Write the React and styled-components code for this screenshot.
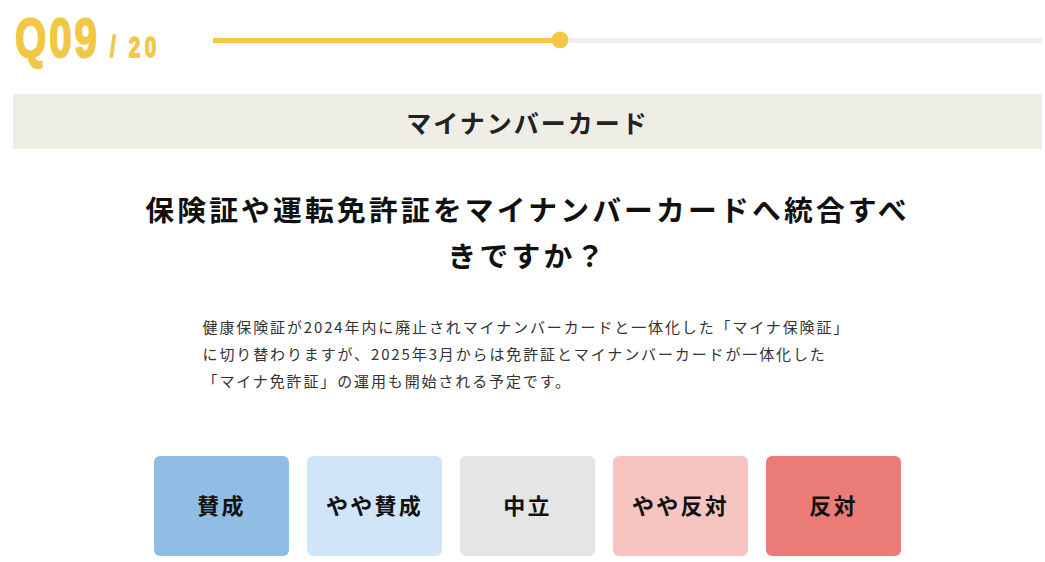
import React from "react";
import styled, { createGlobalStyle } from "styled-components";

const Global = createGlobalStyle`
  html, body { margin: 0; padding: 0; background: #fff; }
  body { font-family: "Noto Sans CJK JP", "Noto Sans", sans-serif; color: #222; }
`;

const Page = styled.div`
  padding: 0 3px 0 13px;
  box-sizing: border-box;
  width: 1045px;
`;

const Header = styled.header`
  display: flex;
  align-items: center;
  height: 80px;
`;

const Counter = styled.div`
  width: 200px;
  flex: none;
  box-sizing: border-box;
  padding-left: 2px;
  height: 58px;
  margin-bottom: 3px;
  color: #f2c744;
  font-family: "Liberation Sans", Arial, sans-serif;
  font-weight: 700;
  line-height: 1;
`;

const Condensed = styled.div`
  display: inline-block;
  white-space: nowrap;
  transform: scaleX(0.72);
  transform-origin: left center;
  -webkit-text-stroke: 2px #f2c744;
`;

const Current = styled.span`
  font-size: 56px;
  letter-spacing: 4px;
`;

const Total = styled.span`
  margin-left: 14px;
  font-size: 29px;
  letter-spacing: 6px;
  word-spacing: -2px;
  -webkit-text-stroke: 1.4px #f2c744;
`;

const Track = styled.div`
  position: relative;
  flex: 1;
  height: 5px;
  background: #efefef;
`;

const Fill = styled.div`
  position: absolute;
  left: 0;
  top: 0;
  bottom: 0;
  background: #f2c744;
`;

const Knob = styled.div`
  position: absolute;
  top: 50%;
  width: 17px;
  height: 17px;
  border-radius: 50%;
  background: #f2c744;
  transform: translate(-50%, -50%);
`;

const Category = styled.div`
  margin-top: 14px;
  height: 55px;
  background: #efeee6;
  display: flex;
  align-items: center;
  justify-content: center;
  font-size: 25px;
  font-weight: 700;
  letter-spacing: 0.08em;
  color: #222;
`;

const Question = styled.h1`
  margin: 37px auto 0;
  max-width: 790px;
  text-align: center;
  font-size: 28.8px;
  line-height: 46px;
  font-weight: 700;
  letter-spacing: 0.11em;
  color: #111;
`;

const Description = styled.p`
  margin: 35px auto 0;
  width: 650px;
  white-space: nowrap;
  font-size: 15px;
  line-height: 27px;
  letter-spacing: 0.125em;
  color: #333;
`;

const Choices = styled.div`
  margin-top: 62px;
  display: flex;
  justify-content: center;
  gap: 18px;
`;

const Choice = styled.button`
  width: 135px;
  height: 100px;
  border: none;
  border-radius: 6px;
  background: ${(p) => p.$bg};
  font-family: "Noto Sans CJK JP", sans-serif;
  font-size: 22px;
  font-weight: 700;
  letter-spacing: 0.1em;
  color: #111;
  cursor: pointer;
  padding: 0 0 5px;
`;

const choices = [
  { label: "賛成", bg: "#8fbde3" },
  { label: "やや賛成", bg: "#d0e5f8" },
  { label: "中立", bg: "#e5e5e5" },
  { label: "やや反対", bg: "#f6c5c2" },
  { label: "反対", bg: "#ea7b77" },
];

export default function App() {
  const progress = (560 - 213) / (1042 - 213);
  return (
    <Page>
      <Global />
      <Header>
        <Counter>
          <Condensed>
            <Current>Q09</Current>
            <Total>/ 20</Total>
          </Condensed>
        </Counter>
        <Track>
          <Fill style={{ width: `${progress * 100}%` }} />
          <Knob style={{ left: `${progress * 100}%` }} />
        </Track>
      </Header>
      <Category>マイナンバーカード</Category>
      <Question>保険証や運転免許証をマイナンバーカードへ統合すべきですか？</Question>
      <Description>
        健康保険証が2024年内に廃止されマイナンバーカードと一体化した「マイナ保険証」
        <br />
        に切り替わりますが、2025年3月からは免許証とマイナンバーカードが一体化した
        <br />
        「マイナ免許証」の運用も開始される予定です。
      </Description>
      <Choices>
        {choices.map((c) => (
          <Choice key={c.label} $bg={c.bg}>
            {c.label}
          </Choice>
        ))}
      </Choices>
    </Page>
  );
}
